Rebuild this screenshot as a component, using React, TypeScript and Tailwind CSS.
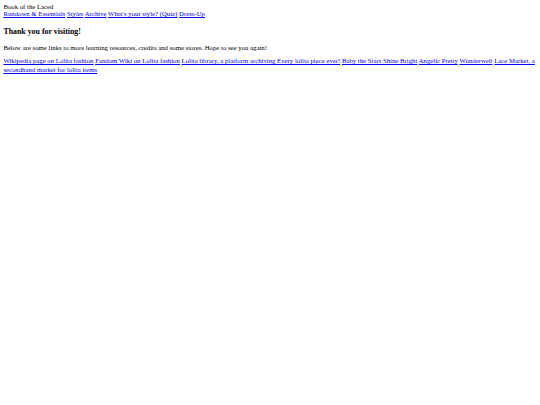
const navLinks = [
  "Rundown & Essentials",
  "Styles",
  "Archive",
  "What's your style? (Quiz)",
  "Dress-Up",
];

const resourceLinks = [
  "Wikipedia page on Lolita fashion",
  "Fandom Wiki on Lolita fashion",
  "Lolita library, a platform archiving Every lolita piece ever!",
  "Baby the Stars Shine Bright",
  "Angelic Pretty",
  "Wunderwelt",
  "Lace Market, a secondhand market for lolita items",
];

function LinkList({ items }: { items: string[] }) {
  return (
    <>
      {items.map((label, i) => (
        <span key={label}>
          <a href="#" className="text-[#0000ee] underline">
            {label}
          </a>
          {i < items.length - 1 ? " " : null}
        </span>
      ))}
    </>
  );
}

export default function App() {
  return (
    <div className="min-h-[405px] bg-white p-[3.375px] font-['Liberation_Serif',serif] text-[6.75px] leading-[normal] text-black">
      <header>
        <div>Book of the Laced</div>
        <nav>
          <LinkList items={navLinks} />
        </nav>
      </header>
      <main>
        <h3 className="mt-[1.2em] mb-[1em] text-[1.17em] font-bold">Thank you for visiting!</h3>
        <p className="my-[1em]">
          Below are some links to more learning resources, credits and some stores. Hope to see you again!
        </p>
        <p className="my-[1em] leading-[1.2]">
          <LinkList items={resourceLinks} />
        </p>
      </main>
    </div>
  );
}
